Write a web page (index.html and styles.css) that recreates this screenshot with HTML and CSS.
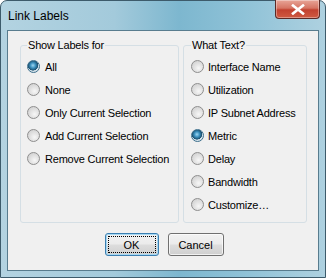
FILE: index.html
```html
<!DOCTYPE html>
<html>
<head>
<meta charset="utf-8">
<link rel="stylesheet" href="styles.css">
</head>
<body>
<div class="window">
  <div class="titlebar">
    <span class="title">Link Labels</span>
    <span class="close"><svg width="14" height="11" viewBox="0 0 14 11"><path d="M2 1.5 L12 9.5 M12 1.5 L2 9.5" stroke="#fff" stroke-width="2.6" stroke-linecap="square"/></svg></span>
  </div>
  <div class="client">
    <div class="groups">
      <fieldset class="group left">
        <legend>Show Labels for</legend>
        <div class="row"><span class="radio checked"></span>All</div>
        <div class="row"><span class="radio"></span>None</div>
        <div class="row"><span class="radio"></span>Only Current Selection</div>
        <div class="row"><span class="radio"></span>Add Current Selection</div>
        <div class="row"><span class="radio"></span>Remove Current Selection</div>
      </fieldset>
      <fieldset class="group right">
        <legend>What Text?</legend>
        <div class="row"><span class="radio"></span>Interface Name</div>
        <div class="row"><span class="radio"></span>Utilization</div>
        <div class="row"><span class="radio"></span>IP Subnet Address</div>
        <div class="row"><span class="radio checked"></span>Metric</div>
        <div class="row"><span class="radio"></span>Delay</div>
        <div class="row"><span class="radio"></span>Bandwidth</div>
        <div class="row"><span class="radio"></span>Customize…</div>
      </fieldset>
    </div>
    <div class="buttons">
      <button class="btn default"><span class="focus">OK</span></button>
      <button class="btn cancel">Cancel</button>
    </div>
  </div>
</div>
</body>
</html>
```

FILE: styles.css
```css
html, body {
  margin: 0;
  padding: 0;
  background: #ffffff;
}
body {
  font-family: "Liberation Sans", Arial, sans-serif;
  font-size: 11px;
  letter-spacing: -0.2px;
  color: #000;
}
.window {
  width: 326px;
  height: 278px;
  box-sizing: border-box;
  border: 1px solid #3d5b6b;
  border-radius: 7px 7px 0 0;
  background: linear-gradient(to right, #b3d3e1 0%, #a3cadb 35%, #7db7cf 55%, #8fc2d7 75%, #aed1e0 100%);
  padding: 0 6px 6px 6px;
  display: flex;
  flex-direction: column;
}
.titlebar {
  height: 29px;
  display: flex;
  align-items: flex-start;
  justify-content: space-between;
  flex: none;
}
.title {
  font-family: "Liberation Sans", Arial, sans-serif;
  font-size: 12px;
  letter-spacing: 0;
  margin-top: 8px;
  margin-left: 1px;
  color: #000;
}
.close {
  width: 45px;
  height: 19px;
  box-sizing: border-box;
  margin-top: -1px;
  margin-right: -1px;
  border: 1px solid #5b2a26;
  border-top: none;
  border-radius: 0 0 4px 4px;
  background: linear-gradient(to bottom, #e8a598 0%, #d67564 45%, #c2412f 55%, #cf5a42 100%);
  display: flex;
  align-items: center;
  justify-content: center;
  box-shadow: inset 0 0 0 1px rgba(255,255,255,0.35);
}
.client {
  flex: 1;
  border: 1px solid #587c8e;
  background: #f0f0f0;
  display: flex;
  flex-direction: column;
}
.groups {
  display: flex;
  gap: 4px;
  padding: 8px 0 0 12px;
}
.group {
  margin: 0;
  border: 1px solid #d5dfe5;
  border-radius: 3px;
  padding: 3px 6px 0 6px;
  height: 184px;
  box-sizing: border-box;
}
.group legend {
  padding: 0 1px;
  line-height: 13px;
}
.group.left {
  width: 159px;
}
.group.right {
  width: 124px;
  padding-left: 7px;
}
.row {
  height: 23px;
  display: flex;
  align-items: center;
  gap: 5px;
  white-space: nowrap;
}
.right .row {
  gap: 4px;
}
.radio {
  width: 13px;
  height: 13px;
  box-sizing: border-box;
  border-radius: 50%;
  border: 1px solid #8e8e8e;
  background: radial-gradient(circle at 60% 65%, #f7f7f7 0%, #e6e6e6 35%, #c9c9c9 100%);
  flex: none;
}
.radio.checked {
  border-color: #3d6f8c;
  background: radial-gradient(circle at 45% 40%, #9fd7f2 0%, #3a8fbd 30%, #1d4f6e 55%, #cfdfe8 60%, #eef3f6 100%);
}
.buttons {
  display: flex;
  justify-content: center;
  gap: 9px;
  padding-top: 10px;
  padding-left: 2px;
}
.btn {
  height: 23px;
  box-sizing: border-box;
  border-radius: 3px;
  border: 1px solid #707070;
  background: linear-gradient(to bottom, #f2f2f2 0%, #ebebeb 48%, #dddddd 52%, #cfcfcf 100%);
  font-family: "Liberation Sans", Arial, sans-serif;
  font-size: 11px;
  color: #000;
  padding: 0;
  display: flex;
  align-items: center;
  justify-content: center;
  box-shadow: inset 0 0 0 1px rgba(255,255,255,0.7);
}
.btn.default {
  width: 54px;
  border-color: #3c7fb1;
  box-shadow: inset 0 0 0 1px #a6d8f3;
  padding: 2px;
}
.focus {
  flex: 1;
  align-self: stretch;
  border: 1px dotted #000;
  display: flex;
  align-items: center;
  justify-content: center;
}
.btn.cancel {
  width: 56px;
}
```
